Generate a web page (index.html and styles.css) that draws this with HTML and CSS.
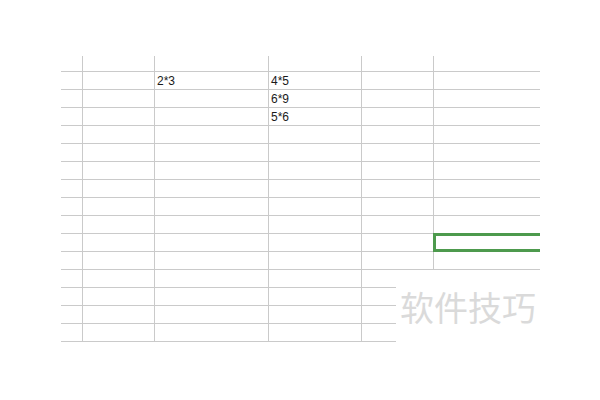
FILE: index.html
```html
<!DOCTYPE html>
<html lang="zh">
<head>
<meta charset="utf-8">
<link rel="stylesheet" href="styles.css">
</head>
<body>
<div class="page">
  <div class="sheet">
    <div class="row head"><div class="c"></div><div class="c"></div><div class="c"></div><div class="c"></div><div class="c"></div><div class="c"></div><div class="c"></div></div>
    <div class="row"><div class="c"></div><div class="c"></div><div class="c">2*3</div><div class="c">4*5</div><div class="c"></div><div class="c"></div><div class="c"></div></div>
    <div class="row"><div class="c"></div><div class="c"></div><div class="c"></div><div class="c">6*9</div><div class="c"></div><div class="c"></div><div class="c"></div></div>
    <div class="row"><div class="c"></div><div class="c"></div><div class="c"></div><div class="c">5*6</div><div class="c"></div><div class="c"></div><div class="c"></div></div>
    <div class="row"><div class="c"></div><div class="c"></div><div class="c"></div><div class="c"></div><div class="c"></div><div class="c"></div><div class="c"></div></div>
    <div class="row"><div class="c"></div><div class="c"></div><div class="c"></div><div class="c"></div><div class="c"></div><div class="c"></div><div class="c"></div></div>
    <div class="row"><div class="c"></div><div class="c"></div><div class="c"></div><div class="c"></div><div class="c"></div><div class="c"></div><div class="c"></div></div>
    <div class="row"><div class="c"></div><div class="c"></div><div class="c"></div><div class="c"></div><div class="c"></div><div class="c"></div><div class="c"></div></div>
    <div class="row"><div class="c"></div><div class="c"></div><div class="c"></div><div class="c"></div><div class="c"></div><div class="c"></div><div class="c"></div></div>
    <div class="row"><div class="c"></div><div class="c"></div><div class="c"></div><div class="c"></div><div class="c"></div><div class="c"></div><div class="c"></div></div>
    <div class="row"><div class="c"></div><div class="c"></div><div class="c"></div><div class="c"></div><div class="c"></div><div class="c"></div><div class="c selected"></div></div>
    <div class="row"><div class="c"></div><div class="c"></div><div class="c"></div><div class="c"></div><div class="c"></div><div class="c"></div><div class="c"></div></div>
    <div class="row short"><div class="c"></div><div class="c"></div><div class="c"></div><div class="c"></div><div class="c"></div><div class="c"></div><div class="c"></div></div>
    <div class="row short"><div class="c"></div><div class="c"></div><div class="c"></div><div class="c"></div><div class="c"></div><div class="c"></div><div class="c"></div></div>
    <div class="row short"><div class="c"></div><div class="c"></div><div class="c"></div><div class="c"></div><div class="c"></div><div class="c"></div><div class="c"></div></div>
    <div class="row short"><div class="c"></div><div class="c"></div><div class="c"></div><div class="c"></div><div class="c"></div><div class="c"></div><div class="c"></div></div>
  </div>
  <div class="watermark">软件技巧</div>
</div>
</body>
</html>
```

FILE: styles.css
```css
html, body {
  margin: 0;
  padding: 0;
  background: #ffffff;
}

.page {
  position: relative;
  width: 600px;
  height: 400px;
  overflow: hidden;
}

.sheet {
  margin: 56px 0 0 61px;
  width: 479px;
  font-family: "Liberation Sans", Arial, sans-serif;
  font-size: 12px;
  color: #1a1a1a;
}

.row {
  display: flex;
  height: 18px;
}

.row.head {
  height: 16px;
}

.c {
  box-sizing: border-box;
  height: 100%;
  border-bottom: 1px solid #cacaca;
  padding: 1px 0 0 2px;
  line-height: 17px;
  white-space: nowrap;
  flex: none;
}

.c:nth-child(1) { width: 22px; border-right: 1px solid #cacaca; }
.c:nth-child(2) { width: 72px; border-right: 1px solid #cacaca; }
.c:nth-child(3) { width: 114px; border-right: 1px solid #cacaca; }
.c:nth-child(4) { width: 93px; border-right: 1px solid #cacaca; }
.c:nth-child(5) { width: 34px; }
.c:nth-child(6) { width: 38px; border-right: 1px solid #cacaca; }
.c:nth-child(7) { width: 106px; }

.row.short .c:nth-child(6),
.row.short .c:nth-child(7) {
  border-bottom-color: transparent;
  border-right-color: transparent;
}

.selected {
  position: relative;
}

.selected::after {
  content: "";
  position: absolute;
  top: -1px;
  left: -1px;
  right: 0;
  bottom: -1px;
  border: 3px solid #4d9a4d;
  border-right: none;
}

.watermark {
  position: absolute;
  left: 400px;
  top: 287px;
  font-family: "Noto Sans CJK SC", sans-serif;
  font-size: 34px;
  line-height: 1.2;
  color: #dadada;
  letter-spacing: 0;
}
```
